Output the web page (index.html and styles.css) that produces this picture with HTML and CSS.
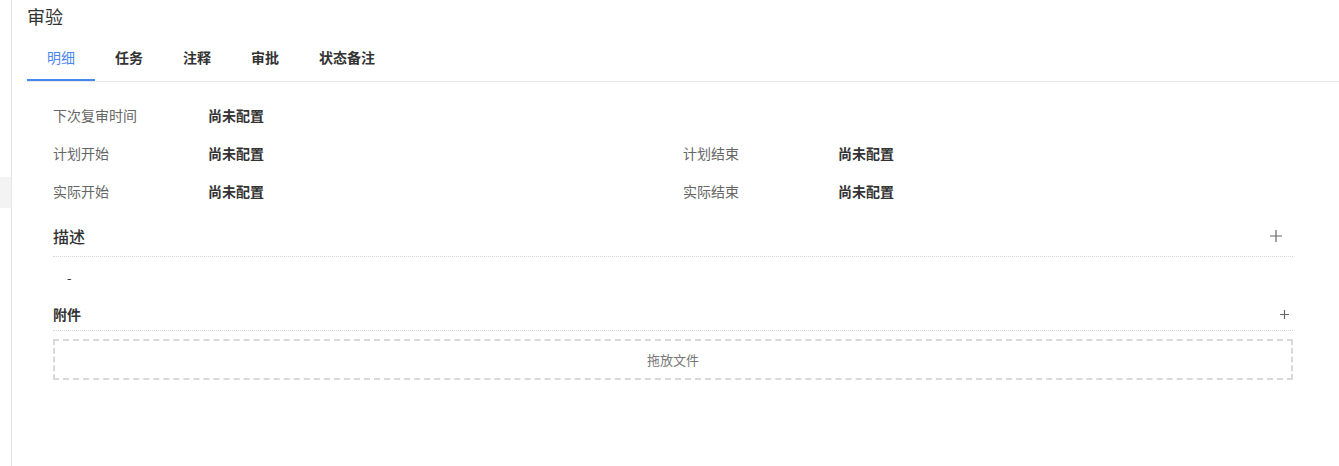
FILE: index.html
```html
<!DOCTYPE html>
<html lang="zh">
<head>
  <meta charset="UTF-8" />
  <title>审验</title>
  <link rel="stylesheet" href="styles.css">
</head>
<body>
  <div class="page">
    <aside class="side">
      <div class="side-item"></div>
    </aside>

    <main class="panel">
      <h1 class="title">审验</h1>

      <nav class="tabs">
        <a class="tab active">明细</a>
        <a class="tab">任务</a>
        <a class="tab">注释</a>
        <a class="tab">审批</a>
        <a class="tab">状态备注</a>
      </nav>

      <section class="content">
        <div class="fields">
          <div class="label">下次复审时间</div>
          <div class="value">尚未配置</div>
          <div></div>
          <div></div>

          <div class="label">计划开始</div>
          <div class="value">尚未配置</div>
          <div class="label">计划结束</div>
          <div class="value">尚未配置</div>

          <div class="label">实际开始</div>
          <div class="value">尚未配置</div>
          <div class="label">实际结束</div>
          <div class="value">尚未配置</div>
        </div>

        <div class="block-head desc-head">
          <span>描述</span>
          <svg class="plus plus-lg" width="12" height="12" viewBox="0 0 12 12"><path d="M6 0v12M0 6h12" stroke="#666" stroke-width="1.2" fill="none"/></svg>
        </div>
        <div class="desc-body">-</div>

        <div class="block-head file-head">
          <span>附件</span>
          <svg class="plus plus-sm" width="9" height="9" viewBox="0 0 9 9"><path d="M4.5 0v9M0 4.5h9" stroke="#666" stroke-width="1.2" fill="none"/></svg>
        </div>
        <div class="drop">拖放文件</div>
      </section>
    </main>
  </div>
</body>
</html>
```

FILE: styles.css
```css
body {
  margin: 0;
  font-family: "Noto Sans CJK SC", "Noto Sans", sans-serif;
  color: #333;
  background: white;
}

.page {
  display: flex;
  height: 466px;
}

.side {
  width: 11px;
  padding-top: 177px;
}

.side-item {
  height: 31px;
  background: #f3f3f3;
}

.panel {
  flex: 1;
  border-left: 1px solid #e6e6e6;
  padding-left: 15px;
}

.title {
  margin: 0;
  font-size: 18px;
  font-weight: normal;
  line-height: 32px;
  color: #333;
}

.tabs {
  display: flex;
  border-bottom: 1px solid #e8e8e8;
}

.tab {
  padding: 15px 20px 12px;
  font-size: 14px;
  font-weight: bold;
  line-height: 20px;
  color: #333;
  border-bottom: 2px solid transparent;
}

.tab.active {
  color: #4a86f0;
  font-weight: normal;
  border-bottom-color: #4a86f0;
}

.content {
  padding: 14px 46px 0 26px;
}

.fields {
  display: grid;
  grid-template-columns: 155px 475px 155px 1fr;
  line-height: 38px;
  font-size: 14px;
}

.label {
  color: #666;
}

.value {
  font-weight: bold;
  color: #333;
}

.block-head {
  display: flex;
  justify-content: space-between;
  align-items: center;
  border-bottom: 1px dotted #d6d6d6;
  font-weight: bold;
}

.desc-head {
  margin-top: 6px;
  height: 40px;
  font-size: 16px;
  font-weight: 500;
}

.desc-head .plus {
  margin-right: 11px;
}

.file-head {
  height: 32px;
  font-size: 14px;
}

.file-head .plus {
  margin-right: 4px;
}

.desc-body {
  line-height: 41px;
  padding-left: 14px;
  font-size: 13px;
}

.drop {
  margin-top: 8px;
  border: 2px dashed #d9d9d9;
  line-height: 37px;
  text-align: center;
  font-size: 13px;
  color: #777;
}
```
